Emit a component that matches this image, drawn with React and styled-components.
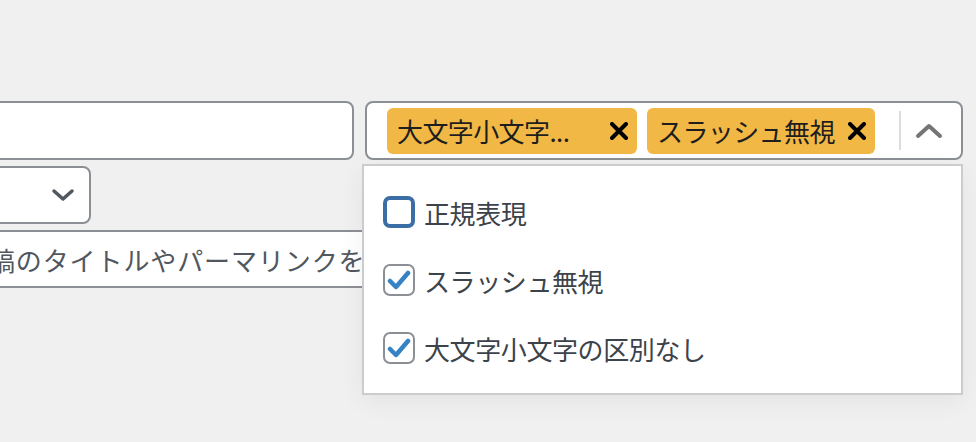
import React from "react";
import styled, { createGlobalStyle } from "styled-components";

const GlobalStyle = createGlobalStyle`
  html, body {
    margin: 0;
    padding: 0;
    background: #f0f0f1;
    overflow: hidden;
  }
  body {
    font-family: "Noto Sans CJK JP", "Noto Sans", "Liberation Sans", sans-serif;
  }
`;

const Page = styled.div`
  width: 976px;
  height: 442px;
  padding-top: 101px;
  box-sizing: border-box;
`;

const Row = styled.div`
  display: flex;
  align-items: flex-start;
  gap: 11px;
`;

const LeftColumn = styled.div`
  margin-left: -40px;
  width: 394px;
  display: flex;
  flex-direction: column;
  gap: 6px;
`;

const TextBox = styled.input`
  box-sizing: border-box;
  width: ${(p) => p.$width || "100%"};
  height: ${(p) => p.$height || "58px"};
  border: 2px solid #8c8f94;
  border-radius: 8px;
  background: #fff;
  padding: 0;
  font-family: inherit;
  font-size: 26px;
  letter-spacing: 0.9px;
  color: #2c3338;
  outline: none;

  &::placeholder {
    color: #50575e;
    opacity: 1;
  }
`;

const SelectBox = styled.div`
  box-sizing: border-box;
  width: 131px;
  height: 58px;
  border: 2px solid #8c8f94;
  border-radius: 8px;
  background: #fff;
  display: flex;
  align-items: center;
  justify-content: flex-end;
  padding-right: 14px;
  color: #50575e;
`;

const MultiSelect = styled.div`
  position: relative;
  width: 598px;
`;

const Control = styled.div`
  box-sizing: border-box;
  height: 59px;
  border: 2px solid #8c8f94;
  border-radius: 8px;
  background: #fff;
  display: flex;
  align-items: center;
  padding: 0 18px 0 20px;
`;

const Tags = styled.div`
  display: flex;
  gap: 10px;
  flex: 1;
`;

const Tag = styled.div`
  box-sizing: border-box;
  height: 46px;
  width: ${(p) => p.$width || "auto"};
  border-radius: 6px;
  background: #f2b845;
  display: flex;
  align-items: center;
  justify-content: space-between;
  padding: 0 8px 0 10px;
  color: #1e1e1e;
  font-size: 26px;
  letter-spacing: -0.6px;
  gap: 12px;
`;

const TagLabel = styled.span`
  white-space: nowrap;
  line-height: 46px;
`;

const RemoveButton = styled.span`
  display: flex;
  align-items: center;
  justify-content: center;
  width: 20px;
  height: 20px;
`;

const Separator = styled.span`
  width: 2px;
  height: 39px;
  background: #dcdcde;
  margin-right: 14px;
`;

const Indicator = styled.span`
  display: flex;
  align-items: center;
  color: #757575;
`;

const Menu = styled.div`
  position: absolute;
  top: calc(100% + 4px);
  left: -3px;
  right: 0;
  z-index: 2;
  box-sizing: border-box;
  height: 231px;
  background: #fff;
  border: 2px solid #ccc;
  box-shadow: 0 6px 24px rgba(0, 0, 0, 0.06);
  padding: 12px 0 11px;
`;

const Option = styled.label`
  display: flex;
  align-items: center;
  height: 68px;
  padding-left: 19px;
  gap: 9px;
  font-size: 26px;
  letter-spacing: -0.4px;
  color: #3c434a;
`;

const CheckBox = styled.span`
  box-sizing: border-box;
  width: 32px;
  height: 32px;
  border-radius: 7px;
  border: ${(p) => (p.$focused ? "4px solid #3a6ea5" : "2px solid #8c8f94")};
  background: #fff;
  display: flex;
  align-items: center;
  justify-content: center;
  flex-shrink: 0;
`;

const Cross = () => (
  <svg width="18" height="18" viewBox="0 0 18 18">
    <path d="M2 2 L16 16 M16 2 L2 16" stroke="#000" strokeWidth="4" strokeLinecap="round" />
  </svg>
);

const ChevronUp = () => (
  <svg width="28" height="16" viewBox="0 0 28 16">
    <path d="M3 13 L14 3 L25 13" fill="none" stroke="currentColor" strokeWidth="4" strokeLinecap="round" strokeLinejoin="round" />
  </svg>
);

const ChevronDown = () => (
  <svg width="24" height="14" viewBox="0 0 24 14">
    <path d="M3 3 L12 11 L21 3" fill="none" stroke="currentColor" strokeWidth="3.5" strokeLinecap="round" strokeLinejoin="round" />
  </svg>
);

const Check = () => (
  <svg width="24" height="22" viewBox="0 0 24 22">
    <path d="M3 12 L9 18 L21 4" fill="none" stroke="#3582c4" strokeWidth="4.5" strokeLinecap="round" strokeLinejoin="round" />
  </svg>
);

const options = [
  { label: "正規表現", checked: false, focused: true },
  { label: "スラッシュ無視", checked: true },
  { label: "大文字小文字の区別なし", checked: true },
];

const App = () => {
  return (
    <>
      <GlobalStyle />
      <Page>
        <Row>
          <LeftColumn>
            <TextBox $height="59px" readOnly />
            <SelectBox>
              <ChevronDown />
            </SelectBox>
            <TextBox
              $width="500px"
              readOnly
              placeholder="投稿のタイトルやパーマリンクを検索"
            />
          </LeftColumn>
          <MultiSelect>
            <Control>
              <Tags>
                <Tag $width="250px">
                  <TagLabel>大文字小文字...</TagLabel>
                  <RemoveButton>
                    <Cross />
                  </RemoveButton>
                </Tag>
                <Tag>
                  <TagLabel>スラッシュ無視</TagLabel>
                  <RemoveButton>
                    <Cross />
                  </RemoveButton>
                </Tag>
              </Tags>
              <Separator />
              <Indicator>
                <ChevronUp />
              </Indicator>
            </Control>
            <Menu>
              {options.map((o) => (
                <Option key={o.label}>
                  <CheckBox $focused={o.focused}>{o.checked && <Check />}</CheckBox>
                  {o.label}
                </Option>
              ))}
            </Menu>
          </MultiSelect>
        </Row>
      </Page>
    </>
  );
};

export default App;
